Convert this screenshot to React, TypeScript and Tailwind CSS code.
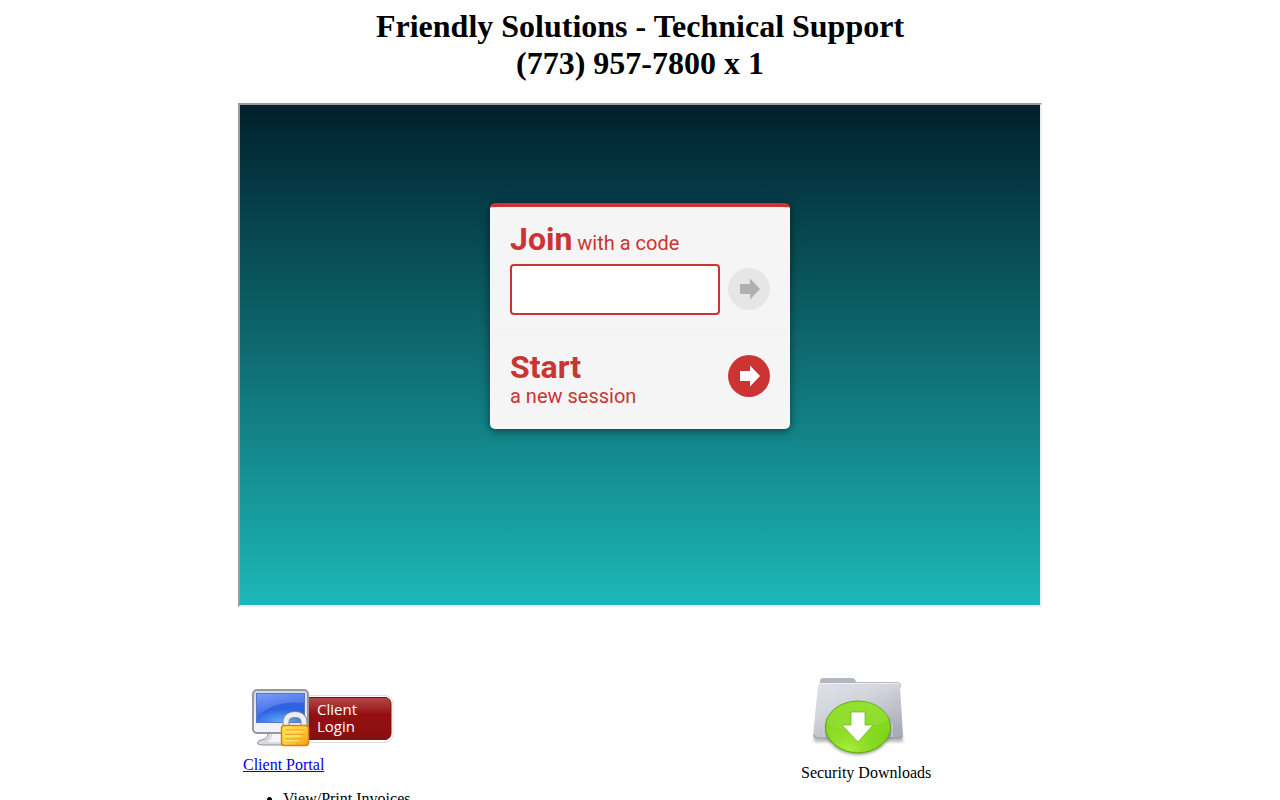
import React from "react";

function ArrowIcon() {
  return (
    <svg viewBox="0 0 42 42" className="size-full" fill="currentColor" aria-hidden="true">
      <path d="M12 16h10V10.500L32 21 22 31.500V26H12z" />
    </svg>
  );
}

function ClientLoginBadge() {
  return (
    <svg viewBox="0 0 152 62" className="h-[62px] w-[152px]" role="img" aria-label="Client Login">
      <defs>
        <linearGradient id="badge" x1="0" y1="0" x2="0" y2="1">
          <stop offset="0" stopColor="#b04a4a" />
          <stop offset="0.250" stopColor="#a12828" />
          <stop offset="0.400" stopColor="#940f10" />
          <stop offset="0.850" stopColor="#8e0f10" />
          <stop offset="1" stopColor="#7d1213" />
        </linearGradient>
        <linearGradient id="screen" x1="0" y1="0" x2="0.300" y2="1">
          <stop offset="0" stopColor="#7d9df5" />
          <stop offset="0.600" stopColor="#4a75ea" />
          <stop offset="1" stopColor="#3560e0" />
        </linearGradient>
        <radialGradient id="glow" cx="0.550" cy="1" r="0.650">
          <stop offset="0" stopColor="#62b4ff" />
          <stop offset="1" stopColor="#2f62e2" />
        </radialGradient>
        <linearGradient id="bezel" x1="0" y1="0" x2="0" y2="1">
          <stop offset="0" stopColor="#cdd6ea" />
          <stop offset="0.700" stopColor="#eef0f5" />
          <stop offset="1" stopColor="#f4f4f6" />
        </linearGradient>
        <linearGradient id="gold" x1="0" y1="0" x2="1" y2="1">
          <stop offset="0" stopColor="#ffe45a" />
          <stop offset="0.500" stopColor="#ffd03c" />
          <stop offset="1" stopColor="#f79a1c" />
        </linearGradient>
      </defs>
      <rect x="56" y="8.500" width="94" height="47" rx="8" fill="#fff" stroke="#dcdce2" />
      <rect x="58" y="10.500" width="90" height="42" rx="6" fill="url(#badge)" stroke="#7b1214" />
      <path d="M25 45c0 5-2 7-7 8q-5 2-3 4 2 1 6 1h22V45z" fill="#d9dade" stroke="#8f9096" />
      <path d="M29 46c0 5-1 7-5 9h17v-9z" fill="#f6f6f8" />
      <rect x="10" y="3" width="55" height="43" rx="4" fill="url(#bezel)" stroke="#96989f" strokeWidth="2" />
      <rect x="13.500" y="6.500" width="48" height="29" fill="url(#screen)" stroke="#5a75c4" />
      <path d="M14 30C27 17 44 14 61 16V35H14z" fill="url(#glow)" />
      <path d="M43 39v-4c0-10 18-10 18 0v4" fill="none" stroke="#85878f" strokeWidth="7" />
      <path d="M43 39v-4c0-10 18-10 18 0v4" fill="none" stroke="#edeef3" strokeWidth="5" />
      <rect x="38.500" y="38.500" width="27" height="20" rx="3" fill="url(#gold)" stroke="#e07d1a" strokeWidth="1.500" />
      <path d="M42 43h20M42 47.500h20M42 52h20" stroke="#f0a026" />
      <path d="M42 44.500h17M42 49h16M42 53.500h14" stroke="#ffee70" />
      <text x="74" y="28" fill="#fff" fontSize="15" fontFamily="'Open Sans', 'Noto Sans', sans-serif">Client</text>
      <text x="74" y="45" fill="#fff" fontSize="15" fontFamily="'Open Sans', 'Noto Sans', sans-serif">Login</text>
    </svg>
  );
}

function DownloadFolder() {
  return (
    <svg viewBox="0 0 114 84" className="h-[84px] w-[114px]" role="img" aria-label="Downloads folder">
      <defs>
        <linearGradient id="folder" x1="0" y1="0" x2="0.700" y2="1">
          <stop offset="0" stopColor="#e2e3e9" />
          <stop offset="0.450" stopColor="#d2d4dc" />
          <stop offset="1" stopColor="#abadb9" />
        </linearGradient>
        <linearGradient id="green" x1="0" y1="0" x2="0" y2="1">
          <stop offset="0" stopColor="#8be01c" />
          <stop offset="0.500" stopColor="#84d81d" />
          <stop offset="1" stopColor="#72cb12" />
        </linearGradient>
        <radialGradient id="shine" cx="0.350" cy="0.950" r="0.700">
          <stop offset="0" stopColor="#a9ee3c" />
          <stop offset="1" stopColor="#96e02a" stopOpacity="0" />
        </radialGradient>
        <filter id="soft" x="-20%" y="-20%" width="140%" height="140%">
          <feGaussianBlur stdDeviation="1.500" />
        </filter>
      </defs>
      <path d="M13 62h89v6H13z" fill="#777" opacity="0.500" filter="url(#soft)" />
      <path d="M19 10V7q0-3 3-3h29q3 0 4 4h40q5 0 5 4l-3 8H20z" fill="#b4b6c0" />
      <path d="M20 9h76q3 0 3 3l3 49q0 4-4 4H16q-4 0-4-4l5-49q0-3 3-3z" fill="url(#folder)" />
      <path d="M20 9.500h76q2 0 2 2" fill="none" stroke="#eff0f4" />
      <path d="M13 61q0 3 4 3h80q4 0 4-3" fill="none" stroke="#9496a2" />
      <path d="M23 63V51q0-4 5-4M91 63V51q0-4-5-4" fill="none" stroke="#e0e1e8" />
      <ellipse cx="57" cy="55" rx="33" ry="26" fill="#555" opacity="0.500" filter="url(#soft)" />
      <ellipse cx="57" cy="53" rx="32.500" ry="26" fill="url(#green)" stroke="#62ad16" />
      <ellipse cx="57" cy="54" rx="31" ry="24" fill="url(#shine)" />
      <path d="M26 50C29 22 83 20 88 45 75 54 45 60 26 50z" fill="#fff" opacity="0.080" />
      <path d="M50 38h14v13h8L57 68 41 51h9z" fill="#fff" stroke="#67b51b" strokeWidth="0.700" />
    </svg>
  );
}

function SessionCard() {
  return (
    <section className="w-[300px] rounded-[5px] border-t-4 border-[#cc3333] bg-[#f5f5f5] font-[Roboto,sans-serif] text-[#cc3333] shadow-[0_2px_10px_rgba(0,0,0,0.5)]">
      <form className="border-b border-[#f0f0f0] px-5 pt-3 pb-[19px]" onSubmit={(e) => e.preventDefault()}>
        <label htmlFor="code" className="block text-xl leading-10">
          <strong className="text-[32px] font-bold">Join</strong> with a code
        </label>
        <div className="mt-px flex items-start gap-2">
          <input
            id="code"
            type="text"
            autoComplete="off"
            className="h-[51px] min-w-0 flex-1 rounded border-2 border-[#cc3333] bg-white px-3 text-2xl outline-none"
          />
          <button type="submit" disabled aria-label="Join session" className="mt-1 size-[42px] rounded-full bg-[#e6e6e6] text-[#b0b0b0]">
            <ArrowIcon />
          </button>
        </div>
      </form>
      <div className="flex items-start justify-between px-5 pt-4 pb-[21px]">
        <p className="text-xl leading-6">
          <strong className="block text-[32px] leading-[33px] font-bold">Start</strong>
          a new session
        </p>
        <button type="button" aria-label="Start a new session" className="mt-1 size-[42px] rounded-full bg-[#cc3333] text-white">
          <ArrowIcon />
        </button>
      </div>
    </section>
  );
}

export default function App() {
  return (
    <div className="bg-white px-2 pt-2 font-['Liberation_Serif',serif] text-base leading-[18px] text-black">
      <h1 className="text-center text-[32px] leading-[37px] font-bold">
        Friendly Solutions - Technical Support
        <br />
        (773) 957-7800 x 1
      </h1>
      <main className="mx-auto mt-[21px] w-full max-w-[804px]">
        <div className="flex min-h-[504px] justify-center border-2 border-t-[#9a9a9a] border-r-[#eeeeee] border-b-[#eeeeee] border-l-[#9a9a9a] bg-linear-to-b/srgb from-[#00202c] to-[#1cb8b8] pt-[98px]">
          <div>
            <SessionCard />
          </div>
        </div>
        <div className="flex justify-between px-[5px] pt-[67px]">
          <div className="pt-[13px]">
            <a href="#portal" className="flex flex-col items-start text-[#0000ee] underline">
              <ClientLoginBadge />
              <span className="mt-[7px]">Client Portal</span>
            </a>
            <ul className="mt-4 list-disc pl-10">
              <li>View/Print Invoices</li>
            </ul>
          </div>
          <div className="w-[236px]">
            <DownloadFolder />
            <p className="mt-[6px]">Security Downloads</p>
          </div>
        </div>
      </main>
    </div>
  );
}
